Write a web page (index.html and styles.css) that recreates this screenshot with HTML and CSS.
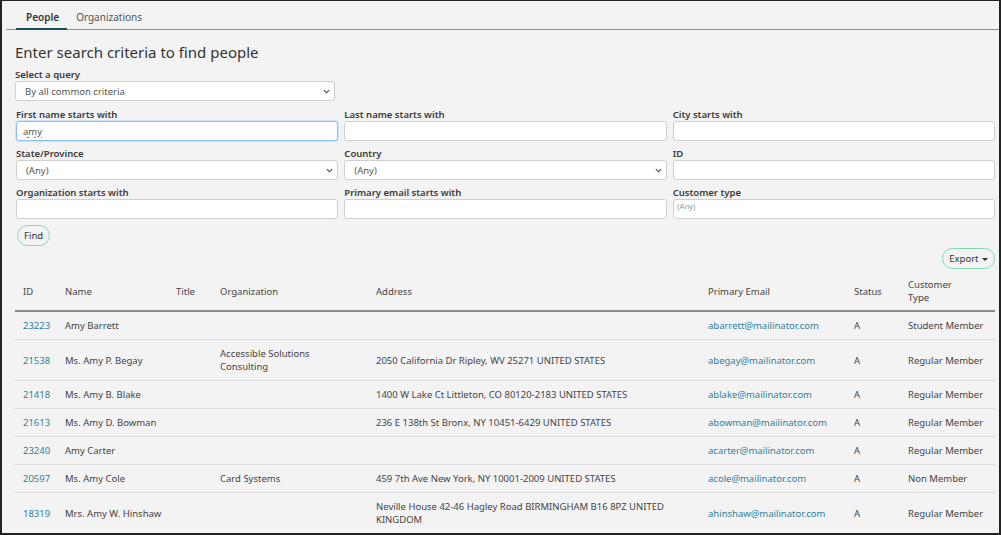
FILE: index.html
```html
<!DOCTYPE html>
<html lang="en">
<head>
  <meta charset="UTF-8" />
  <title>Find people</title>
  <link rel="stylesheet" href="styles.css">
</head>
<body>
<div class="page">

  <!-- Tabs -->
  <div class="tabs">
    <a class="tab active">People</a>
    <a class="tab">Organizations</a>
  </div>

  <div class="content">
    <h1>Enter search criteria to find people</h1>

    <div class="field query">
      <label>Select a query</label>
      <div class="select">
        <select><option>By all common criteria</option></select>
        <svg class="chev" viewBox="0 0 8 5" width="7" height="5"><path d="M1 1l3 3 3-3" fill="none" stroke="#444" stroke-width="1.3"/></svg>
      </div>
    </div>

    <!-- Search form -->
    <div class="grid">
      <div class="field">
        <label>First name starts with</label>
        <input class="focused" type="text" value="amy">
      </div>
      <div class="field">
        <label>Last name starts with</label>
        <input type="text">
      </div>
      <div class="field">
        <label>City starts with</label>
        <input type="text">
      </div>
      <div class="field">
        <label>State/Province</label>
        <div class="select">
          <select><option>(Any)</option></select>
          <svg class="chev" viewBox="0 0 8 5" width="7" height="5"><path d="M1 1l3 3 3-3" fill="none" stroke="#444" stroke-width="1.3"/></svg>
        </div>
      </div>
      <div class="field">
        <label>Country</label>
        <div class="select">
          <select><option>(Any)</option></select>
          <svg class="chev" viewBox="0 0 8 5" width="7" height="5"><path d="M1 1l3 3 3-3" fill="none" stroke="#444" stroke-width="1.3"/></svg>
        </div>
      </div>
      <div class="field">
        <label>ID</label>
        <input type="text">
      </div>
      <div class="field">
        <label>Organization starts with</label>
        <input type="text">
      </div>
      <div class="field">
        <label>Primary email starts with</label>
        <input type="text">
      </div>
      <div class="field">
        <label>Customer type</label>
        <div class="multi">(Any)</div>
      </div>
    </div>

    <button class="btn">Find</button>

    <div class="toolbar">
      <button class="btn">Export <span class="caret"></span></button>
    </div>

    <!-- Results -->
    <table class="results">
      <colgroup>
        <col style="width:42px"><col style="width:111px"><col style="width:44px"><col style="width:156px">
        <col style="width:332px"><col style="width:146px"><col style="width:54px"><col style="width:95px">
      </colgroup>
      <thead>
        <tr>
          <th>ID</th><th>Name</th><th>Title</th><th>Organization</th><th>Address</th>
          <th>Primary Email</th><th>Status</th><th>Customer<br>Type</th>
        </tr>
      </thead>
      <tbody>
        <tr>
          <td><a>23223</a></td><td>Amy Barrett</td><td></td><td></td><td></td>
          <td><a>abarrett@mailinator.com</a></td><td>A</td><td>Student Member</td>
        </tr>
        <tr>
          <td><a>21538</a></td><td>Ms. Amy P. Begay</td><td></td><td>Accessible Solutions Consulting</td>
          <td>2050 California Dr Ripley, WV 25271 UNITED STATES</td>
          <td><a>abegay@mailinator.com</a></td><td>A</td><td>Regular Member</td>
        </tr>
        <tr>
          <td><a>21418</a></td><td>Ms. Amy B. Blake</td><td></td><td></td>
          <td>1400 W Lake Ct Littleton, CO 80120-2183 UNITED STATES</td>
          <td><a>ablake@mailinator.com</a></td><td>A</td><td>Regular Member</td>
        </tr>
        <tr>
          <td><a>21613</a></td><td>Ms. Amy D. Bowman</td><td></td><td></td>
          <td>236 E 138th St Bronx, NY 10451-6429 UNITED STATES</td>
          <td><a>abowman@mailinator.com</a></td><td>A</td><td>Regular Member</td>
        </tr>
        <tr>
          <td><a>23240</a></td><td>Amy Carter</td><td></td><td></td><td></td>
          <td><a>acarter@mailinator.com</a></td><td>A</td><td>Regular Member</td>
        </tr>
        <tr>
          <td><a>20597</a></td><td>Ms. Amy Cole</td><td></td><td>Card Systems</td>
          <td>459 7th Ave New York, NY 10001-2009 UNITED STATES</td>
          <td><a>acole@mailinator.com</a></td><td>A</td><td>Non Member</td>
        </tr>
        <tr>
          <td><a>18319</a></td><td>Mrs. Amy W. Hinshaw</td><td></td><td></td>
          <td>Neville House 42-46 Hagley Road BIRMINGHAM B16 8PZ UNITED KINGDOM</td>
          <td><a>ahinshaw@mailinator.com</a></td><td>A</td><td>Regular Member</td>
        </tr>
      </tbody>
    </table>
  </div>

</div>
</body>
</html>
```

FILE: styles.css
```css
html, body {
  margin: 0;
  padding: 0;
}
body {
  font-family: 'Noto Sans', 'Open Sans', sans-serif;
  color: #3a3a3a;
}
.page {
  box-sizing: border-box;
  width: 1001px;
  height: 535px;
  overflow: hidden;
  background: #f3f3f3;
  border: 1px solid #222;
  border-width: 1px 2px 2px 2px;
}

/* Tabs */
.tabs {
  display: flex;
  margin-left: 4px;
  padding: 6px 0 0 10px;
  border-bottom: 1px solid #8c8c8c;
}
.tab {
  padding: 4px 9px 4px;
  font-size: 10px;
  line-height: 13px;
  color: #555;
}
.tab.active {
  font-weight: 600;
  color: #333;
  border-bottom: 2px solid #1f4e5b;
  margin-bottom: -1px;
  padding-left: 10px;
  padding-right: 8px;
}

.content {
  padding: 0 4px 0 13px;
}
h1 {
  font-size: 15px;
  font-weight: 400;
  line-height: 20px;
  margin: 12px 0 7px;
  color: #333;
}

/* Form */
.field label {
  display: block;
  font-size: 9.5px;
  font-weight: 600;
  line-height: 12px;
  margin-bottom: 0;
  color: #3a3a3a;
}
.query {
  width: 322px;
  margin-bottom: 8px;
}
.query .select {
  width: 320px;
}
.grid {
  display: grid;
  grid-template-columns: repeat(3, 1fr);
  gap: 7px 6px;
  padding-left: 1px;
}
input, select, .multi {
  box-sizing: border-box;
  display: block;
  width: 100%;
  height: 20px;
  border: 1px solid #cfcfcf;
  border-radius: 3px;
  background: #fff;
  font-family: 'Noto Sans', sans-serif;
  font-size: 9.5px;
  color: #555;
  outline: none;
}
input {
  padding: 0 6px;
}
input.focused {
  border-color: #8cbff0;
  box-shadow: 0 0 0 1px #cfe4fa;
  text-decoration: underline wavy #e04040;
}
.select {
  position: relative;
}
select {
  appearance: none;
  padding: 0 9px;
}
.chev {
  position: absolute;
  right: 5px;
  top: 8px;
}
.multi {
  padding: 2px 3px;
  font-family: 'Liberation Sans', Arial, sans-serif;
  font-size: 8px;
  color: #999;
}

/* Buttons */
.btn {
  height: 21px;
  padding: 0 6px;
  border: 1.5px solid #7fdab1;
  border-radius: 11px;
  background: transparent;
  font-family: 'Noto Sans', sans-serif;
  font-size: 9.5px;
  color: #333;
  cursor: pointer;
}
.content > .btn {
  margin: 6px 0 0 2px;
}
.toolbar {
  display: flex;
  justify-content: flex-end;
  margin-top: 2px;
}
.caret {
  display: inline-block;
  border-top: 3px solid #333;
  border-left: 3px solid transparent;
  border-right: 3px solid transparent;
  vertical-align: middle;
  margin-left: 1px;
}

/* Results table */
.results {
  width: 980px;
  table-layout: fixed;
  border-collapse: collapse;
  margin-top: 5px;
  font-size: 9.5px;
  line-height: 13px;
}
.results th {
  text-align: left;
  font-weight: 400;
  color: #444;
  padding: 4px 8px 6px;
  vertical-align: middle;
  border-bottom: 2px solid #8a8a8a;
}
.results td {
  padding: 7px 8px;
  vertical-align: middle;
  border-bottom: 1px solid #dcdcdc;
  color: #444;
}
.results td:nth-child(2) {
  padding-right: 2px;
}
.results a {
  color: #2f7f9c;
}
```
